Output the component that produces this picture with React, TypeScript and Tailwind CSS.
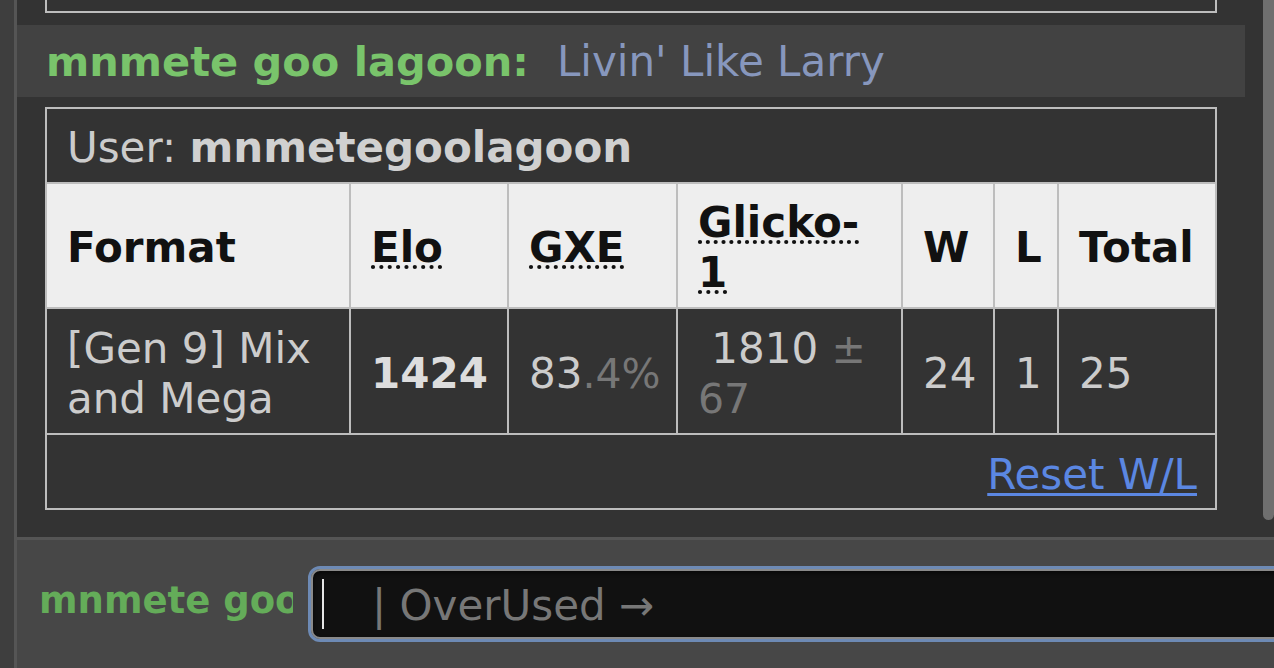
const headCell = 'flex items-center bg-[#eee] px-5 pt-[5px] font-bold text-[#111]';
const dataCell = 'flex items-center bg-[#333] px-5 pt-[5px] text-[#ccc]';

const ChatLog = () => {
  return (
    <div className="min-w-0 flex-1">
      {/* bottom of the previous rank table */}
      <div className="ml-[28px] mr-[46px] h-[13px] border-x-2 border-b-2 border-[#bdbdbd]" />

      <div className="mr-[18px] mt-[12px] flex h-[72px] items-center whitespace-nowrap bg-[#424242] pl-[29px] pt-[2px]">
        <strong className="text-[41.5px] text-[#79c46b]">mnmete goo lagoon:</strong>
        <span className="ml-[28px] text-[#8797bd]">Livin' Like Larry</span>
      </div>

      <div className="ml-[28px] mr-[46px] mt-[10px] grid grid-cols-[302px_156px_167px_223px_90px_62px_156px] grid-rows-[73px_123px_124px_73px] gap-[2px] bg-[#bdbdbd] p-[2px]">
        <div className="col-span-7 flex items-center bg-[#333] px-5 pt-[4px] text-[#ccc]">
          User:&nbsp;<strong className="text-[#d0d0d0]">mnmetegoolagoon</strong>
        </div>

        <div className={headCell}>Format</div>
        <div className={headCell}>
          <abbr title="Elo rating">Elo</abbr>
        </div>
        <div className={headCell}>
          <abbr title="user's percentage chance of winning a random battle">GXE</abbr>
        </div>
        <div className={headCell}>
          <div>
            <abbr title="Glicko-1 rating: rating ± deviation">Glicko-1</abbr>
          </div>
        </div>
        <div className={headCell}>W</div>
        <div className={headCell}>L</div>
        <div className={headCell}>Total</div>

        <div className={dataCell}>
          <div>[Gen 9] Mix and Mega</div>
        </div>
        <div className={dataCell}>
          <strong className="text-[#ddd]">1424</strong>
        </div>
        <div className={dataCell}>
          <span>
            83<small className="text-[41px] text-[#777]">.4%</small>
          </span>
        </div>
        <div className={dataCell}>
          <div>
            &nbsp;1810 <small className="text-[41px] text-[#777]">± 67</small>
          </div>
        </div>
        <div className={dataCell}>24</div>
        <div className={dataCell}>1</div>
        <div className={dataCell}>25</div>

        <div className="col-span-7 flex items-center justify-end bg-[#333] pr-[18px] pt-[6px]">
          <a href="#" className="text-[#5b87e2] underline decoration-[3px] underline-offset-[4px]">
            Reset W/L
          </a>
        </div>
      </div>
    </div>
  );
};

const Composer = () => {
  return (
    <div className="flex flex-1 items-start bg-[#474747] pl-[22px] pt-[26px]">
      <div className="w-[254px] shrink-0 overflow-hidden whitespace-nowrap text-[37px] font-bold leading-[70px] text-[#64ac59]">
        mnmete goo lagoon
      </div>
      <div className="ml-[15px] h-[76px] w-[1000px] shrink-0 rounded-[12px] border-[3px] border-[#6d8ab5]">
        <div className="flex h-full items-center rounded-[9px] border-2 border-[#8a8a8a] bg-[#111] pl-[9px] shadow-[inset_0_2px_4px_rgba(0,0,0,0.6)]">
          <div className="h-[50px] w-[2px] bg-[#e6e6e6]" />
          <span className="ml-[48px] mt-[3px] whitespace-nowrap text-[42px] text-[#777]">| OverUsed →</span>
        </div>
      </div>
    </div>
  );
};

export default function App() {
  return (
    <div className="flex h-[668px] w-[1274px] overflow-hidden bg-[#3e3e3e] font-['DejaVu_Sans',Verdana,sans-serif] text-[42px] leading-[50px]">
      <div className="w-[14px] shrink-0" />
      <div className="w-[3px] shrink-0 bg-[#555]" />
      <div className="flex min-w-0 flex-1 flex-col">
        <div className="flex h-[537px] shrink-0 bg-[#333]">
          <ChatLog />
          <div className="w-[11px] shrink-0">
            <div className="h-[520px] rounded-b-[9px] bg-[#6f6f6f]" />
          </div>
        </div>
        <div className="h-[3px] shrink-0 bg-[#555]" />
        <Composer />
      </div>
    </div>
  );
}
